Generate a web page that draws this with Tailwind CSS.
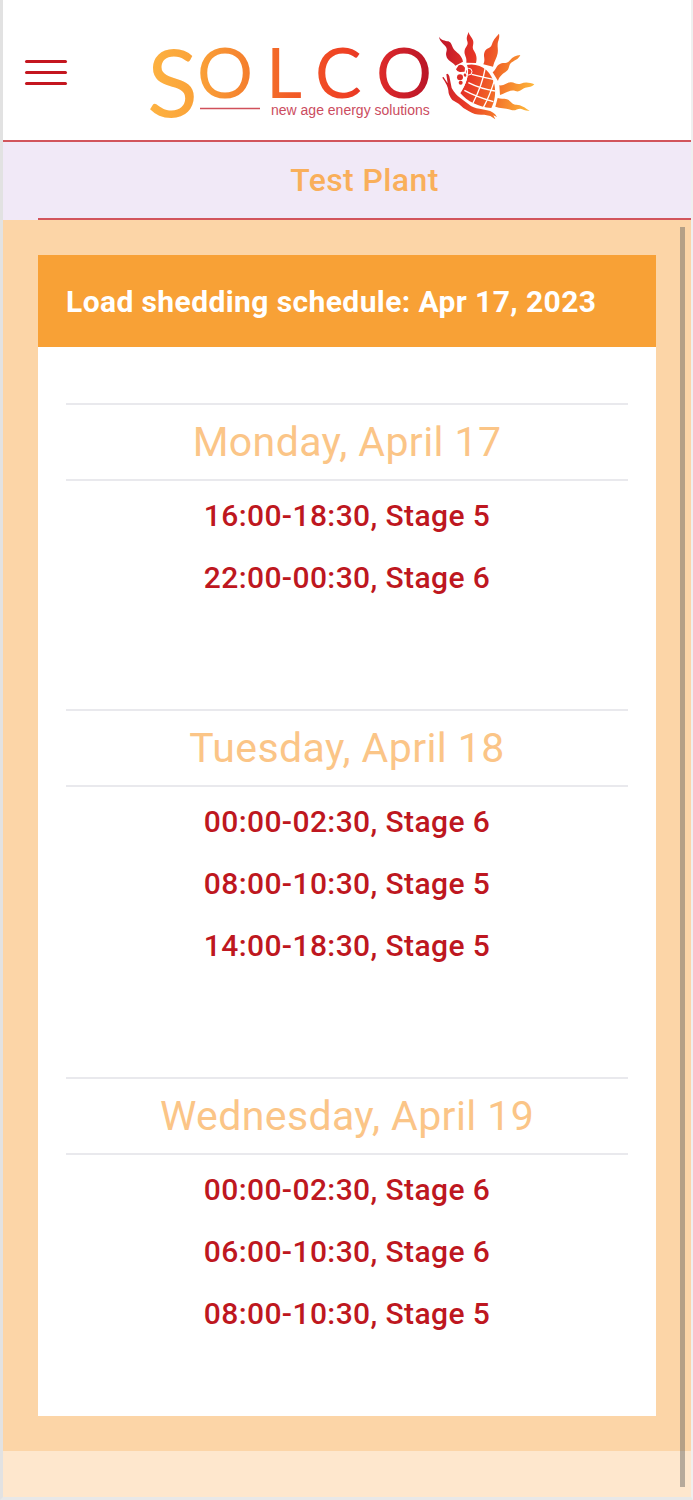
<!DOCTYPE html>
<html lang="en">
<head>
<meta charset="utf-8">
<meta name="viewport" content="width=device-width, initial-scale=1">
<title>Solco – Load shedding schedule</title>
<script src="https://cdn.jsdelivr.net/npm/@tailwindcss/browser@4"></script>
</head>
<body class="flex min-h-screen flex-col border-l-3 border-r-2 border-b-3 border-l-[#e2e2e2] border-r-[#efefef] border-b-[#e8e8e8] bg-[#fee7cd] font-[Roboto,sans-serif] tracking-wide">
  <header class="grid grid-cols-[88px_1fr_96px] border-b-2 border-[#d2555c] bg-white pt-7 pb-[18px]">
    <button type="button" aria-label="Menu" class="mb-[6px] ml-[22px] flex w-[42px] flex-col justify-center gap-2">
      <span class="h-[3px] w-full rounded-full bg-[#c4161f]"></span>
      <span class="h-[3px] w-full rounded-full bg-[#c4161f]"></span>
      <span class="h-[3px] w-full rounded-full bg-[#c4161f]"></span>
    </button>
    <a href="#" aria-label="Solco, new age energy solutions" class="justify-self-center">
      <svg class="h-[94px] w-[390px] overflow-visible tracking-normal" viewBox="148 28 390 94">
        <defs>
          <linearGradient id="word" gradientUnits="userSpaceOnUse" x1="150" y1="0" x2="432" y2="0">
            <stop offset="0" stop-color="#fdb241"/><stop offset=".18" stop-color="#faa037"/><stop offset=".37" stop-color="#f47a2c"/><stop offset=".5" stop-color="#f25c27"/><stop offset=".7" stop-color="#ef4023"/><stop offset=".84" stop-color="#d8262a"/><stop offset="1" stop-color="#b81428"/>
          </linearGradient>
          <linearGradient id="sun" gradientUnits="userSpaceOnUse" x1="40" y1="130" x2="310" y2="190">
            <stop offset="0" stop-color="#c51a29"/><stop offset=".3" stop-color="#e73526"/><stop offset=".6" stop-color="#f26a28"/><stop offset="1" stop-color="#fdb53a"/>
          </linearGradient>
        </defs>
        <g fill="url(#word)" font-family="Lato, sans-serif">
          <text x="147" y="117" font-size="94">S</text>
          <text x="197 266 315 376" y="98" font-size="70">OLCO</text>
        </g>
        <path d="M200 108.500H260" stroke="#d0505a" stroke-width="1.500"/>
        <text x="271" y="115" font-size="14" fill="#cb4c60" font-family="Liberation Sans, sans-serif">new age energy solutions</text>
        <g transform="translate(430 20) scale(.3333)" fill="url(#sun)">
          <path d="M27 50C34 61 45 62 55 64C67 68 65 82 74 91C85 101 96 108 99 125L76 137C68 125 52 123 49 108C46 96 54 91 48 81C43 72 29 66 27 50Z"/>
          <path d="M116 36C118 48 129 54 130 65C131 76 125 81 132 92C139 103 142 114 138 129L109 128C112 112 101 105 104 91C107 78 116 77 112 64C108 53 112 47 116 36Z"/>
          <path d="M207 41C210 53 204 62 203 72C202 82 205 88 203 100C201 114 192 124 189 140L160 133C168 117 158 109 164 95C169 83 181 86 185 75C189 61 195 54 207 41Z"/>
          <path d="M271 105C266 119 251 121 242 130C235 138 239 147 229 154C220 161 207 169 204 183L188 157C199 149 199 135 211 131C222 127 231 133 240 121C248 110 258 106 271 105Z"/>
          <path d="M313 193C302 204 292 200 282 205C273 210 268 217 256 213C241 208 228 219 210 225L208 196C223 198 229 188 241 187C253 185 259 196 272 191C287 185 300 188 313 193Z"/>
          <path d="M299 272C287 274 280 267 271 266C261 266 255 274 244 270C229 263 211 267 196 260L203 234C213 237 220 235 231 238C243 242 245 254 257 254C272 253 285 263 299 272Z"/>
          <path d="M109 135C150 126 185 153 193 193C198 218 195 243 184 264C147 261 111 244 90 218C109 194 119 166 109 135Z"/>
          <path d="M86 136Q97 130 105 143L104 155L91 156Q82 157 78 148Z"/>
          <circle cx="90" cy="172" r="9"/><circle cx="92" cy="188" r="6"/><circle cx="106" cy="165" r="5"/><circle cx="116" cy="155" r="8"/>
          <path d="M37 173Q40 168 43 175L53 190L49 163Q54 158 58 169L65 204Q76 224 92 235L115 252Q130 265 149 266L171 271Q191 274 201 291L190 286L196 298L181 288L163 284Q137 287 117 274Q100 266 86 251L67 240Q55 226 55 211Q53 195 37 173Z"/>
        </g>
        <g transform="translate(430 20) scale(.3333)" fill="none" stroke="#fff" stroke-width="4">
          <path d="M166 143Q157 195 129 249M194 179Q180 226 160 263M125 163Q161 172 194 179M115 188Q153 207 195 213M103 211Q138 230 190 245"/>
          <path d="M109 135Q121 166 90 218" stroke-width="4"/>
          <circle cx="116" cy="155" r="10" stroke-width="3"/>
        </g>
      </svg>
    </a>
  </header>

  <div class="bg-[#f1e9f7] pl-[35px]">
    <h1 class="flex h-[78px] items-center justify-center border-b-2 border-[#d2555c] text-[32px] font-medium text-[#f9af5a]">Test Plant</h1>
  </div>

  <main class="relative bg-[#fcd5a7] p-[35px]">
    <section class="bg-white">
      <h2 class="flex min-h-[92px] items-center bg-[#f8a136] px-7 text-[30px] font-bold text-white">Load shedding schedule: Apr 17, 2023</h2>
      <div class="flex flex-col gap-[100px] px-7 pt-14 pb-[71px] text-center">
        <article>
          <h3 class="mb-1 border-y-2 border-[#e9e9ed] text-[41px] leading-[74px] text-[#fbc587]">Monday, April 17</h3>
          <ul class="text-[30px] leading-[62px] font-medium text-[#be1720]">
            <li>16:00-18:30, Stage 5</li>
            <li>22:00-00:30, Stage 6</li>
          </ul>
        </article>
        <article>
          <h3 class="mb-1 border-y-2 border-[#e9e9ed] text-[41px] leading-[74px] text-[#fbc587]">Tuesday, April 18</h3>
          <ul class="text-[30px] leading-[62px] font-medium text-[#be1720]">
            <li>00:00-02:30, Stage 6</li>
            <li>08:00-10:30, Stage 5</li>
            <li>14:00-18:30, Stage 5</li>
          </ul>
        </article>
        <article>
          <h3 class="mb-1 border-y-2 border-[#e9e9ed] text-[41px] leading-[74px] text-[#fbc587]">Wednesday, April 19</h3>
          <ul class="text-[30px] leading-[62px] font-medium text-[#be1720]">
            <li>00:00-02:30, Stage 6</li>
            <li>06:00-10:30, Stage 6</li>
            <li>08:00-10:30, Stage 5</li>
          </ul>
        </article>
      </div>
    </section>
    <div class="absolute top-[7px] right-[6px] -bottom-9 w-[5px] bg-[#5f5f5f]/45"></div>
  </main>
</body>
</html>
